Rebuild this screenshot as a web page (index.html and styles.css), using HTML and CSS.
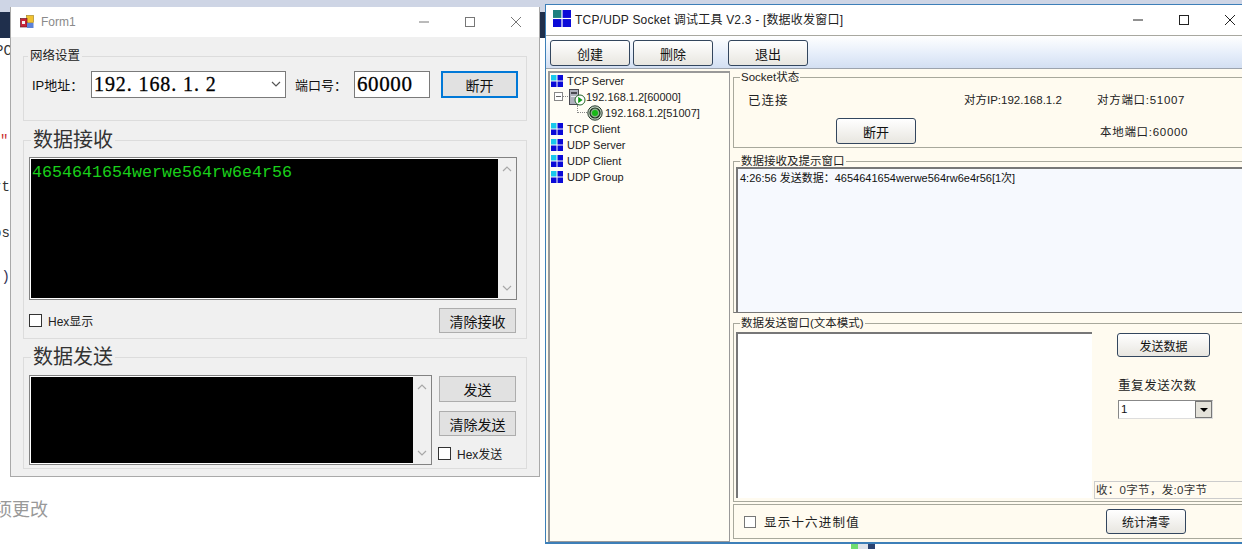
FILE: index.html
```html
<!DOCTYPE html>
<html lang="zh-CN">
<head>
    <meta charset="UTF-8">
    <meta name="viewport" content="width=device-width, initial-scale=1.0">
    <title>Socket 调试</title>
    <link rel="stylesheet" href="styles.css">
</head>
<body>
<svg class="defs" width="0" height="0">
    <symbol id="grid" viewBox="0 0 12 12">
        <rect x="0" y="0" width="5.5" height="5.5" fill="#18c8ec"/>
        <rect x="6.5" y="0" width="5.5" height="5.5" fill="#0a0ad8"/>
        <rect x="0" y="6.5" width="5.5" height="5.5" fill="#0a0ad8"/>
        <rect x="6.5" y="6.5" width="5.5" height="5.5" fill="#0a0ad8"/>
    </symbol>
    <symbol id="chev" viewBox="0 0 10 6">
        <path d="M1 1l4 4 4-4" fill="none" stroke="currentColor" stroke-width="1.2"/>
    </symbol>
    <symbol id="chevup" viewBox="0 0 10 6">
        <path d="M1 5l4-4 4 4" fill="none" stroke="currentColor" stroke-width="1.2"/>
    </symbol>
</svg>

<div class="desk">
    <!-- whatever is behind the two windows -->
    <div class="backdrop">
        <div class="bg-top"></div>
        <div class="bg-nav"></div>
        <div class="bg-line code pc">PC</div>
        <div class="bg-line code red">"</div>
        <div class="bg-line code rt">rt</div>
        <div class="bg-line code os">os</div>
        <div class="bg-line code paren">()</div>
        <div class="bg-note">项更改</div>
        <div class="bg-task"><i class="t1"></i><i class="t2"></i><i class="t3"></i></div>
    </div>

    <div class="win form1">
        <div class="form-title">
            <svg class="form-icon" viewBox="0 0 14 14" width="14" height="14">
                <rect x="6.5" y="0.5" width="7" height="7" fill="#f2c230" stroke="#a98a2a" stroke-width=".7"/>
                <rect x="0.5" y="3.5" width="6.5" height="8.5" fill="#c8243a" stroke="#6a1a24" stroke-width=".7"/>
                <rect x="7" y="8" width="6.5" height="5" fill="#5d82d8"/>
                <rect x="2" y="6" width="3" height="3" fill="#f4f4f4"/>
            </svg>
            <span class="form-name">Form1</span>
            <div class="caption">
                <svg width="12" height="12" viewBox="0 0 12 12"><path d="M1 6h10" stroke="#777"/></svg>
                <svg width="12" height="12" viewBox="0 0 12 12"><rect x="1.5" y="1.5" width="9" height="9" fill="none" stroke="#777"/></svg>
                <svg width="12" height="12" viewBox="0 0 12 12"><path d="M1 1l10 10M11 1L1 11" stroke="#777"/></svg>
            </div>
        </div>
        <div class="form-body">
            <fieldset class="group group-net">
                <legend>网络设置</legend>
                <div class="net-row">
                    <label class="net-label">IP地址：</label>
                    <div class="combo"><span>192. 168. 1. 2</span><svg width="10" height="6"><use href="#chev"/></svg></div>
                    <label class="net-label port-label">端口号：</label>
                    <div class="port">60000</div>
                    <button class="btn btn-focus">断开</button>
                </div>
            </fieldset>

            <fieldset class="group group-recv">
                <legend class="big">数据接收</legend>
                <div class="console console-recv">
                    <div class="screen">4654641654werwe564rw6e4r56</div>
                    <div class="vscroll"><svg width="10" height="6"><use href="#chevup"/></svg><svg width="10" height="6"><use href="#chev"/></svg></div>
                </div>
                <div class="recv-foot">
                    <label class="check"><i class="box"></i>Hex显示</label>
                    <button class="btn btn-plain">清除接收</button>
                </div>
            </fieldset>

            <fieldset class="group group-send">
                <legend class="big">数据发送</legend>
                <div class="send-row">
                    <div class="console console-send">
                        <div class="screen"></div>
                        <div class="vscroll"><svg width="10" height="6"><use href="#chevup"/></svg><svg width="10" height="6"><use href="#chev"/></svg></div>
                    </div>
                    <div class="send-side">
                        <button class="btn btn-plain">发送</button>
                        <button class="btn btn-plain">清除发送</button>
                        <label class="check"><i class="box"></i>Hex发送</label>
                    </div>
                </div>
            </fieldset>
        </div>
    </div>

    <div class="win sock">
        <div class="sock-title">
            <svg width="18" height="17" viewBox="0 0 12 12" preserveAspectRatio="none">
                <rect x="0" y="0" width="5.6" height="5.6" fill="#1d8080"/>
                <rect x="6.4" y="0" width="5.6" height="5.6" fill="#0a0ad8"/>
                <rect x="0" y="6.4" width="5.6" height="5.6" fill="#0a0ad8"/>
                <rect x="6.4" y="6.4" width="5.6" height="5.6" fill="#0a0ad8"/>
            </svg>
            <span class="sock-name">TCP/UDP Socket 调试工具 V2.3 - [数据收发窗口]</span>
            <div class="sock-caption">
                <svg width="12" height="12" viewBox="0 0 12 12"><path d="M1 6h10" stroke="#222"/></svg>
                <svg width="12" height="12" viewBox="0 0 12 12"><rect x="1.5" y="1.5" width="9" height="9" fill="none" stroke="#222"/></svg>
                <svg width="12" height="12" viewBox="0 0 12 12"><path d="M1 1l10 10M11 1L1 11" stroke="#222"/></svg>
            </div>
        </div>
        <div class="toolbar">
            <button class="tbtn">创建</button>
            <button class="tbtn">删除</button>
            <button class="tbtn tbtn-exit">退出</button>
        </div>
        <div class="sock-main">
            <div class="tree">
                <div class="node"><svg width="12" height="12"><use href="#grid"/></svg>TCP Server</div>
                <div class="node node-server">
                    <i class="minus"></i><i class="dots"></i>
                    <svg class="srv" width="18" height="17" viewBox="0 0 18 17">
                        <rect x="1.5" y="0.5" width="9" height="15" fill="#aeb1bc" stroke="#4a4a52"/>
                        <rect x="3" y="3" width="6" height="2" fill="#4a4a52"/>
                        <rect x="3" y="7" width="6" height="1" fill="#e8e8ee"/>
                        <circle cx="12" cy="11" r="5" fill="#fff" stroke="#26632a"/>
                        <path d="M10.2 7.8l4.4 3.2-4.4 3.2z" fill="#12a01a"/>
                    </svg>
                    <span>192.168.1.2[60000]</span>
                </div>
                <div class="node node-client">
                    <i class="elbow"></i>
                    <svg width="16" height="16" viewBox="0 0 16 16">
                        <circle cx="8" cy="8" r="7.2" fill="#c4d4c4" stroke="#26382a"/>
                        <circle cx="8" cy="8" r="5" fill="#8fb08f" stroke="#1c301c" stroke-width="1.2"/>
                        <circle cx="8" cy="8" r="3" fill="#18b818"/>
                    </svg>
                    <span>192.168.1.2[51007]</span>
                </div>
                <div class="node"><svg width="12" height="12"><use href="#grid"/></svg>TCP Client</div>
                <div class="node"><svg width="12" height="12"><use href="#grid"/></svg>UDP Server</div>
                <div class="node"><svg width="12" height="12"><use href="#grid"/></svg>UDP Client</div>
                <div class="node"><svg width="12" height="12"><use href="#grid"/></svg>UDP Group</div>
            </div>
            <div class="pane">
                <fieldset class="sgroup state">
                    <legend>Socket状态</legend>
                    <div class="state-grid">
                        <span class="wide">已连接</span>
                        <span></span>
                        <span>对方IP:192.168.1.2</span>
                        <span class="gapped">对方端口:51007</span>
                        <span></span>
                        <button class="tbtn">断开</button>
                        <span></span>
                        <span class="gapped local">本地端口:60000</span>
                    </div>
                </fieldset>
                <fieldset class="sgroup recv">
                    <legend>数据接收及提示窗口</legend>
                    <div class="recv-log">4:26:56 发送数据：4654641654werwe564rw6e4r56[1次]</div>
                </fieldset>
                <fieldset class="sgroup send">
                    <legend>数据发送窗口(文本模式)</legend>
                    <div class="send-grid">
                        <div class="send-text"></div>
                        <div class="send-opts">
                            <button class="tbtn tbtn-send">发送数据</button>
                            <div class="repeat">重复发送次数</div>
                            <div class="repeat-select"><span>1</span><i class="drop"></i></div>
                            <div class="counts">收：0字节，发:0字节</div>
                        </div>
                    </div>
                </fieldset>
                <div class="foot">
                    <label class="hex"><i class="hexbox"></i>显示十六进制值</label>
                    <button class="tbtn tbtn-clear">统计清零</button>
                </div>
            </div>
        </div>
    </div>
</div>
</body>
</html>
```

FILE: styles.css
```css
* { box-sizing: border-box; }
html, body { margin: 0; padding: 0; overflow: hidden; background: #fff; }
body { font-family: "Liberation Sans", "Noto Sans CJK SC", sans-serif; font-size: 12px; color: #111; }
.defs { position: absolute; }
.desk { position: relative; width: 1242px; height: 549px; overflow: hidden; }
.win { position: absolute; }
button { font-family: inherit; color: #111; }

/* backdrop */
.backdrop { height: 549px; display: flex; flex-direction: column; background: #fff; }
.bg-top { height: 12px; background: #ced5e5; }
.bg-nav { height: 26px; background: #1f2f4c; }
.bg-line { height: 20px; padding-top: 2px; flex: none; }
.code { font-family: "Liberation Mono", monospace; font-size: 14px; color: #333; }
.pc { margin: 3px 0 0 -5px; }
.red { color: #c33; margin: 70px 0 0 0; }
.rt { margin: 26px 0 0 -7px; }
.os { margin: 26px 0 0 -7px; }
.paren { margin: 24px 0 0 -7px; color: #335; }
.bg-note { margin-top: 208px; margin-left: -6px; font-size: 18px; color: #999; font-family: "Noto Sans CJK SC", sans-serif; }
.bg-task { margin-top: auto; margin-left: 851px; display: flex; height: 5px; }
.bg-task i { display: block; height: 5px; }
.t1 { width: 7px; background: #6fdc6f; }
.t2 { width: 10px; background: #dfe3ea; }
.t3 { width: 7px; background: #2c4370; }

/* left window */
.form1 { left: 10px; top: 7px; width: 530px; height: 470px; background: #f0f0f0; border: 1px solid #a9a9a9; border-top: 0; }
.form-title { height: 30px; background: #fff; display: flex; align-items: center; padding-left: 9px; }
.form-icon { margin-right: 7px; }
.form-name { color: #8a8a8a; font-size: 12px; }
.caption { margin-left: auto; display: flex; gap: 34px; padding-right: 17px; }
.form-body { padding: 11px 12px 0 12px; }
.group { margin: 0; padding: 0; border: 1px solid #dcdcdc; min-width: 0; }
.group legend { margin-left: 4px; padding: 0 2px; font-size: 12.5px; line-height: 16px; color: #222; }
.group legend.big { font-size: 20px; line-height: 24px; margin-left: 7px; color: #333; }
.group-net { height: 73px; }
.net-row { display: flex; align-items: center; margin-top: 6px; padding-left: 8px; }
.net-label { font-size: 13px; white-space: nowrap; width: 59px; }
.port-label { width: 59px; margin-left: 9px; }
.combo { width: 195px; height: 27px; background: #fff; border: 1px solid #7a7a7a; display: flex; align-items: center; justify-content: space-between; padding: 0 4px 0 2px; font-family: "Liberation Serif", serif; font-size: 20px; letter-spacing: .9px; color: #000; -webkit-text-stroke: .3px #000; }
.combo svg { color: #555; }
.port { width: 76px; height: 27px; background: #fff; border: 1px solid #7a7a7a; font-family: "Liberation Serif", serif; font-size: 21px; letter-spacing: .6px; line-height: 25px; padding-left: 2px; color: #000; -webkit-text-stroke: .3px #000; }
.btn { background: #e1e1e1; border: 1px solid #adadad; font-size: 14px; padding: 0; }
.btn-focus { width: 77px; height: 27px; margin-left: 11px; margin-top: 1px; border: 2px solid #0078d7; }
.btn-plain { width: 77px; height: 25px; flex: none; }

.group-recv { margin-top: 7px; height: 211px; }
.console { display: flex; background: #f0f0f0; border: 1px solid #828282; }
.console-recv { width: 488px; height: 143px; margin: 5px 0 0 5px; }
.screen { flex: 1; background: #000; border: 1px solid #fff; border-right: 0; font-family: "Liberation Mono", monospace; font-size: 16.67px; line-height: 22px; color: #1ad01a; padding: 3px 0 0 1px; }
.vscroll { width: 18px; display: flex; flex-direction: column; align-items: center; justify-content: space-between; padding: 8px 0; color: #a8a8a8; }
.recv-foot { display: flex; justify-content: space-between; align-items: center; margin: 8px 10px 0 5px; }
.check { display: flex; align-items: center; font-size: 12px; color: #222; }
.box { width: 13px; height: 13px; background: #fff; border: 1px solid #333; margin-right: 6px; }

.group-send { margin-top: 6px; height: 124px; }
.send-row { display: flex; margin: 6px 0 0 5px; }
.console-send { width: 403px; height: 90px; }
.send-side { display: flex; flex-direction: column; margin-left: 7px; padding-top: 1px; }
.send-side .btn { margin-bottom: 9px; }
.send-side .btn:first-child { height: 26px; }
.send-side .check { margin: 0 0 0 -1px; }

/* right window */
.sock { left: 545px; top: 4px; width: 700px; height: 540px; background: #fffbf0; border-left: 1px solid #3d7fb8; border-top: 1px solid #3d7fb8; border-bottom: 2px solid #3d7fb8; display: flex; flex-direction: column; }
.sock-title { height: 31px; flex: none; background: #fff; border-bottom: 1px solid #a8a8a0; display: flex; align-items: center; padding: 0 0 3px 7px; }
.sock-name { margin-left: 4px; font-size: 12px; letter-spacing: .2px; color: #222; }
.sock-caption { margin-left: auto; display: flex; gap: 34px; padding: 2px 9px 0 0; }
.toolbar { height: 33px; flex: none; background: linear-gradient(#fff, #e6eefa 55%, #d3dff2); border-bottom: 1px solid #9ca3ad; display: flex; gap: 3px; padding: 4px 0 0 4px; }
.tbtn { width: 80px; height: 26px; background: linear-gradient(#fff, #e8e6e0); border: 1px solid #33465e; border-radius: 3px; font-size: 13px; padding: 0; }
.tbtn-exit { margin-left: 12px; }
.sock-main { flex: 1; display: flex; min-height: 0; }
.tree { width: 182px; margin: 2px 0 0 2px; background: #fffdf5; border: 1px solid #999; border-top-width: 2px; border-left-width: 2px; font-size: 11px; color: #222; }
.node { height: 16px; display: flex; align-items: center; gap: 4px; padding-left: 1px; white-space: nowrap; }
.node-server { position: relative; padding-left: 18px; gap: 0; }
.node-client { position: relative; padding-left: 37px; gap: 2px; }
.minus { position: absolute; left: 4px; top: 3px; width: 9px; height: 9px; border: 1px solid #888; background: linear-gradient(#666, #666) center / 5px 1px no-repeat #fff; }
.dots { position: absolute; left: 13px; top: 7px; width: 5px; border-top: 1px dotted #888; }
.elbow { position: absolute; left: 27px; top: 0; width: 10px; height: 8px; border-left: 1px dotted #888; border-bottom: 1px dotted #888; }

.pane { flex: 1; min-width: 0; padding: 1px 0 0 3px; }
.sgroup { margin: 0; padding: 0; border: 1px solid #a8a89c; border-right: 0; min-width: 0; }
.sgroup legend { margin-left: 6px; padding: 0 1px; font-size: 11.5px; line-height: 14px; color: #222; }
.state { height: 78px; }
.state-grid { display: grid; grid-template-columns: 87px 128px 133px 1fr; grid-template-rows: 28px 36px; align-items: center; padding: 1px 0 0 15px; font-size: 11.5px; color: #222; }
.wide { font-size: 12.5px; letter-spacing: 1px; margin-left: -1px; }
.gapped { letter-spacing: .7px; }
.local { margin-left: 3px; }
.recv { height: 159px; margin-top: 6px; border-bottom-color: #777; }
.recv-log { height: 145px; margin: -1px 0 0 2px; background: #f6f9fe; border-top: 2px solid #777; border-left: 2px solid #777; padding: 0 0 0 2px; font-size: 11px; color: #111; }
.send { height: 186px; margin-top: 3px; }
.send-grid { display: flex; }
.send-text { width: 356px; height: 166px; margin: 2px 0 0 2px; background: #fff; border-top: 2px solid #777; border-left: 2px solid #777; }
.send-opts { flex: 1; display: flex; flex-direction: column; align-items: flex-start; padding-left: 25px; }
.tbtn-send { width: 93px; height: 24px; margin-top: 3px; font-size: 12px; }
.repeat { margin: 18px 0 0 1px; font-size: 12.5px; letter-spacing: .6px; color: #222; }
.repeat-select { width: 95px; height: 19px; margin: 6px 0 0 1px; background: #fff; border: 1px solid #888; border-right-color: #ddd; border-bottom-color: #ddd; display: flex; justify-content: space-between; font-size: 11.5px; padding-left: 2px; line-height: 17px; flex: none; }
.drop { width: 17px; height: 17px; background: #e4e2da; border: 1px solid #777; position: relative; }
.drop::after { content: ""; position: absolute; left: 4px; top: 6px; border: 4px solid transparent; border-top-color: #000; border-bottom: 0; }
.counts { width: 150px; height: 18px; margin: 62px 0 0 -23px; border: 1px solid #ccc; border-right: 0; padding-left: 1px; font-size: 11.5px; letter-spacing: .3px; line-height: 16px; color: #333; white-space: nowrap; flex: none; }
.foot { height: 35px; margin-top: 2px; border: 1px solid #a8a89c; border-right: 0; display: flex; align-items: center; padding-left: 10px; }
.hex { display: flex; align-items: center; font-size: 12.5px; letter-spacing: 1.2px; color: #222; }
.hexbox { width: 12px; height: 12px; background: #fff; border: 1px solid #777; margin-right: 8px; }
.tbtn-clear { margin-left: 246px; height: 25px; width: 80px; font-size: 12px; }
```
